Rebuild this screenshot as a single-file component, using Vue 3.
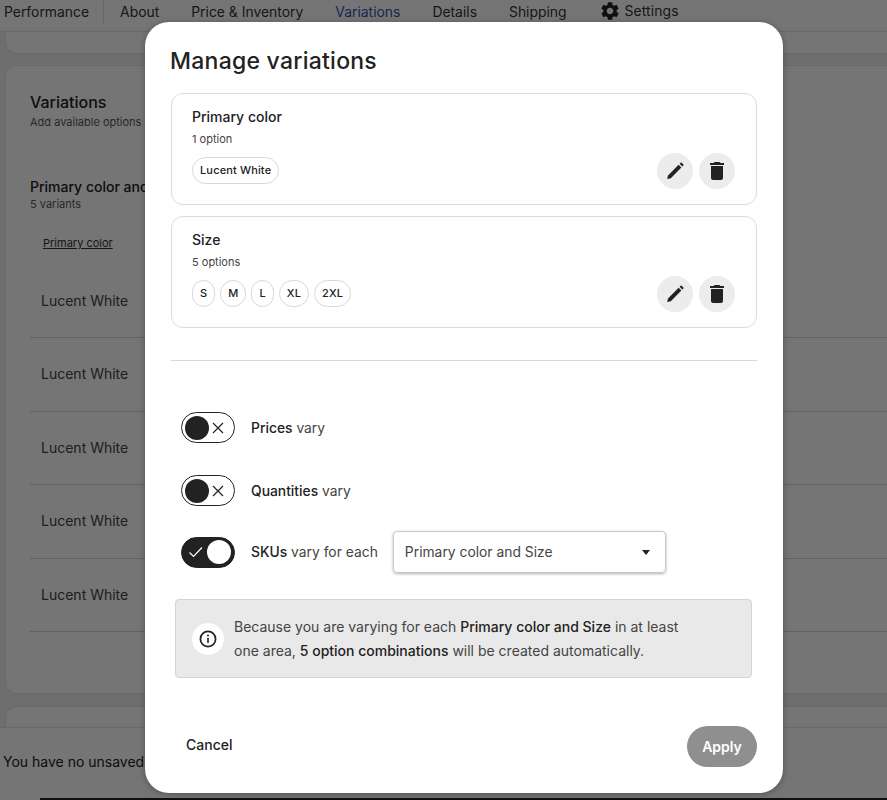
<script setup>
const rows = [1, 2, 3, 4, 5]
const tabs = ['About', 'Price & Inventory', 'Variations', 'Details', 'Shipping']
const groups = [
  { name: 'Primary color', count: '1 option', opts: ['Lucent White'] },
  { name: 'Size', count: '5 options', opts: ['S', 'M', 'L', 'XL', '2XL'] },
]
</script>

<template>
  <div class="page">
    <nav class="tabs">
      <span class="tab first">Performance</span>
      <span class="sep"></span>
      <span v-for="t in tabs" :key="t" class="tab" :class="{ active: t === 'Variations' }">{{ t }}</span>
      <span class="tab settings">
        <svg width="22" height="22" viewBox="0 0 24 24"><path fill="#222" d="M19.14 12.94c.04-.3.06-.61.06-.94s-.02-.64-.07-.94l2.03-1.58a.49.49 0 0 0 .12-.61l-1.92-3.32a.488.488 0 0 0-.59-.22l-2.39.96c-.5-.38-1.03-.7-1.62-.94l-.36-2.54a.484.484 0 0 0-.48-.41h-3.84c-.24 0-.43.17-.47.41l-.36 2.54c-.59.24-1.13.57-1.62.94l-2.39-.96c-.22-.08-.47 0-.59.22L2.74 8.87c-.12.21-.08.47.12.61l2.03 1.58c-.05.3-.09.63-.09.94s.02.64.07.94l-2.03 1.58a.49.49 0 0 0-.12.61l1.92 3.32c.12.22.37.29.59.22l2.39-.96c.5.38 1.03.7 1.62.94l.36 2.54c.05.24.24.41.48.41h3.84c.24 0 .44-.17.47-.41l.36-2.54c.59-.24 1.13-.56 1.62-.94l2.39.96c.22.08.47 0 .59-.22l1.92-3.32c.12-.22.07-.47-.12-.61l-2.01-1.58zM12 15.6c-1.98 0-3.6-1.62-3.6-3.6s1.62-3.6 3.6-3.6 3.6 1.62 3.6 3.6-1.62 3.6-3.6 3.6z"/></svg>
        Settings
      </span>
    </nav>
    <section class="card stub"></section>
    <section class="card variations">
      <h2>Variations</h2>
      <p class="small">Add available options</p>
      <h3>Primary color and Size</h3>
      <p class="small tight">5 variants</p>
      <div class="thead">Primary color</div>
      <div v-for="r in rows" :key="r" class="row">Lucent White</div>
    </section>
    <section class="card third"></section>
    <footer class="savebar">You have no unsaved changes</footer>
    <div class="blackbar"></div>

    <div class="overlay"></div>

    <div class="modal">
      <h1>Manage variations</h1>
      <div class="groups">
        <div v-for="g in groups" :key="g.name" class="group">
          <div class="group-main">
            <div class="g-name">{{ g.name }}</div>
            <div class="g-count">{{ g.count }}</div>
            <div class="chips">
              <span v-for="o in g.opts" :key="o" class="chip">{{ o }}</span>
            </div>
          </div>
          <div class="actions">
            <button class="round">
              <svg width="24" height="24" viewBox="0 0 24 24"><path fill="#222" d="M4.2 20 5 16.4 15.6 5.8 18.4 8.6 7.8 19.2ZM16.6 4.8l1.1-1.1c.3-.3.7-.3 1 0l1.7 1.7c.3.3.3.7 0 1l-1.1 1.1Z"/></svg>
            </button>
            <button class="round">
              <svg width="24" height="24" viewBox="0 0 24 24"><path fill="#222" d="M6 19c0 1.1.9 2 2 2h8c1.1 0 2-.9 2-2V7H6v12zM19 4h-3.5l-1-1h-5l-1 1H5v2h14V4z"/></svg>
            </button>
          </div>
        </div>
      </div>
      <hr class="divider" />
      <div class="toggles">
        <div class="tog-row">
          <span class="toggle off">
            <span class="knob"></span>
            <svg class="mark" width="14" height="14" viewBox="0 0 14 14"><path d="M2 2l10 10M12 2 2 12" stroke="#222" stroke-width="1.2" fill="none"/></svg>
          </span>
          <span class="tog-label"><b>Prices</b> vary</span>
        </div>
        <div class="tog-row">
          <span class="toggle off">
            <span class="knob"></span>
            <svg class="mark" width="14" height="14" viewBox="0 0 14 14"><path d="M2 2l10 10M12 2 2 12" stroke="#222" stroke-width="1.2" fill="none"/></svg>
          </span>
          <span class="tog-label"><b>Quantities</b> vary</span>
        </div>
        <div class="tog-row">
          <span class="toggle on">
            <svg class="mark" width="16" height="14" viewBox="0 0 16 14"><path d="M1.5 7.5 5.5 11.5 14 2.5" stroke="#fff" stroke-width="1.2" fill="none"/></svg>
            <span class="knob"></span>
          </span>
          <span class="tog-label"><b>SKUs</b> vary for each</span>
          <div class="select">
            <span>Primary color and Size</span>
            <span class="caret"></span>
          </div>
        </div>
      </div>
      <div class="info">
        <span class="info-icon">
          <svg width="20" height="20" viewBox="0 0 20 20">
            <circle cx="10" cy="10" r="7.6" fill="none" stroke="#222" stroke-width="1.7"/>
            <rect x="9.2" y="8.8" width="1.6" height="5" fill="#222"/>
            <circle cx="10" cy="6.5" r="1" fill="#222"/>
          </svg>
        </span>
        <p>Because you are varying for each <b>Primary color and Size</b> in at least<br />one area, <b>5 option combinations</b> will be created automatically.</p>
      </div>
      <div class="foot">
        <span class="cancel">Cancel</span>
        <button class="apply">Apply</button>
      </div>
    </div>
  </div>
</template>

<style>
html, body { margin: 0; padding: 0; }
</style>

<style scoped>
.page {
  position: relative;
  width: 887px;
  height: 800px;
  overflow: hidden;
  background: #f1f0ef;
  font-family: Inter, "Noto Sans", sans-serif;
  color: #222;
}
.tabs {
  height: 32px;
  box-sizing: border-box;
  border-bottom: 1px solid #e6e6e6;
  background: #fff;
  display: flex;
  align-items: center;
  gap: 32px;
  padding: 0 0 8px 4px;
  font-size: 13.9px;
  white-space: nowrap;
}
.tab { color: #333; }
.tab.first { margin-right: -18px; }
.sep { width: 1px; height: 24px; background: #ddd; margin-right: -16px; }
.tab.active { color: #3653b5; }
.settings { display: flex; align-items: center; gap: 4px; margin-top: -2px; letter-spacing: .1px; }
.card {
  background: #fff;
  border: 1px solid #e6e6e6;
  border-radius: 12px;
  margin-left: 5px;
  box-sizing: border-box;
  width: 900px;
}
.stub { height: 22px; border-top: 0; border-radius: 0 0 12px 12px; }
.variations { margin-top: 11px; height: 629px; padding: 26px 0 0 24px; }
h2 { margin: 0; font-size: 16px; line-height: 20px; font-weight: 500; }
.small { margin: 3px 0 0; font-size: 11px; line-height: 14px; color: #595959; }
h3 { margin: 49px 0 0; font-size: 14px; line-height: 18px; font-weight: 500; }
.small.tight { margin-top: 1px; }
.thead { margin: 25px 0 0 13px; height: 29px; font-size: 11px; line-height: 14px; text-decoration: underline; color: #333; }
.row {
  height: 73.4px;
  box-sizing: border-box;
  border-bottom: 1px solid #d4d4d4;
  padding: 27px 0 0 11px;
  font-size: 14px;
  line-height: 18px;
  color: #444;
}
.third { margin-top: 12px; height: 60px; }
.savebar {
  position: absolute;
  left: 0; right: 0; top: 727px; bottom: 0;
  background: #fff;
  padding: 25px 0 0 3px;
  box-sizing: border-box;
  font-size: 14px;
  line-height: 18px;
  border-top: 1px solid #e6e6e6;
}
.blackbar { position: absolute; left: 40px; right: 0; bottom: 0; height: 2px; background: #222; }
.overlay { position: absolute; inset: 0; background: rgba(0, 0, 0, .54); }
.modal {
  position: absolute;
  left: 145px;
  top: 22px;
  width: 638px;
  height: 771px;
  box-sizing: border-box;
  padding: 0 26px;
  background: #fff;
  border-radius: 24px;
  box-shadow: 0 1px 6px rgba(0,0,0,.3);
  display: flex;
  flex-direction: column;
}
h1 { margin: 24px 0 0 -1px; font-size: 23px; line-height: 30px; font-weight: 500; letter-spacing: .25px; }
.groups { margin-top: 17px; display: flex; flex-direction: column; gap: 11px; }
.group {
  height: 112px;
  box-sizing: border-box;
  border: 1px solid #dcdcdc;
  border-radius: 12px;
  padding: 13px 21px 0 20px;
  display: flex;
  justify-content: space-between;
}
.g-name { font-size: 14px; line-height: 20px; font-weight: 500; }
.g-count { margin-top: 5px; font-size: 11px; line-height: 14px; color: #444; }
.chips { margin-top: 11px; display: flex; gap: 5px; }
.chip {
  height: 27px;
  box-sizing: border-box;
  border: 1px solid #d8d8d8;
  border-radius: 14px;
  padding: 0 7px;
  font-size: 11px;
  font-weight: 500;
  line-height: 25px;
  letter-spacing: .15px;
}
.actions { display: flex; gap: 6px; margin-top: 46px; height: 36px; }
.round {
  width: 36px; height: 36px;
  border: 0; border-radius: 50%;
  padding: 0;
  background: #ececec;
  display: flex; align-items: center; justify-content: center;
}
.divider { margin: 32px 0 0; border: 0; border-top: 1px solid #d8d8d8; width: 100%; }
.toggles { margin: 51px 0 0 10px; display: flex; flex-direction: column; gap: 32px; }
.tog-row { height: 31px; display: flex; align-items: center; gap: 16px; font-size: 13.85px; color: #444; }
.tog-row:last-child { height: 32px; margin-top: -2px; }
.tog-label b { font-weight: 500; color: #222; }
.toggle {
  width: 54px; height: 31px;
  box-sizing: border-box;
  border-radius: 16px;
  border: 1px solid #222;
  display: flex; align-items: center; justify-content: space-between;
  padding: 0 9px 0 3px;
  flex: none;
}
.toggle .knob { width: 24px; height: 24px; border-radius: 50%; background: #222; }
.toggle.on { background: #222; padding: 0 3px 0 6px; }
.toggle.on .knob { background: #fff; }
.select {
  width: 273px; height: 42px;
  box-sizing: border-box;
  border: 1px solid #c8c8c8;
  border-radius: 4px;
  box-shadow: 0 1px 3px rgba(0,0,0,.3);
  padding: 0 15px 0 11px;
  display: flex; align-items: center; justify-content: space-between;
  color: #444;
  flex: none;
  margin-left: -1px;
}
.caret { width: 0; height: 0; border-left: 4px solid transparent; border-right: 4px solid transparent; border-top: 5px solid #222; }
.info {
  margin: 31px 5px 0 4px;
  height: 79px;
  box-sizing: border-box;
  background: #e9e9e9;
  border: 1px solid #d4d4d4;
  border-radius: 4px;
  display: flex; align-items: center; gap: 10px;
  padding-left: 16px;
}
.info-icon { width: 32px; height: 32px; border-radius: 50%; background: #fff; display: flex; align-items: center; justify-content: center; flex: none; }
.info p { margin: 0; font-size: 14px; line-height: 23.5px; color: #444; }
.info b { font-weight: 500; color: #222; }
.foot { margin-top: 48px; display: flex; align-items: center; justify-content: space-between; }
.cancel { margin: 0 0 4px 15px; font-size: 14px; font-weight: 500; }
.apply {
  width: 70px; height: 41px;
  border: 0; border-radius: 21px;
  background: #8f8f8f;
  color: #fff;
  font: 600 14px Inter, sans-serif;
}
</style>
